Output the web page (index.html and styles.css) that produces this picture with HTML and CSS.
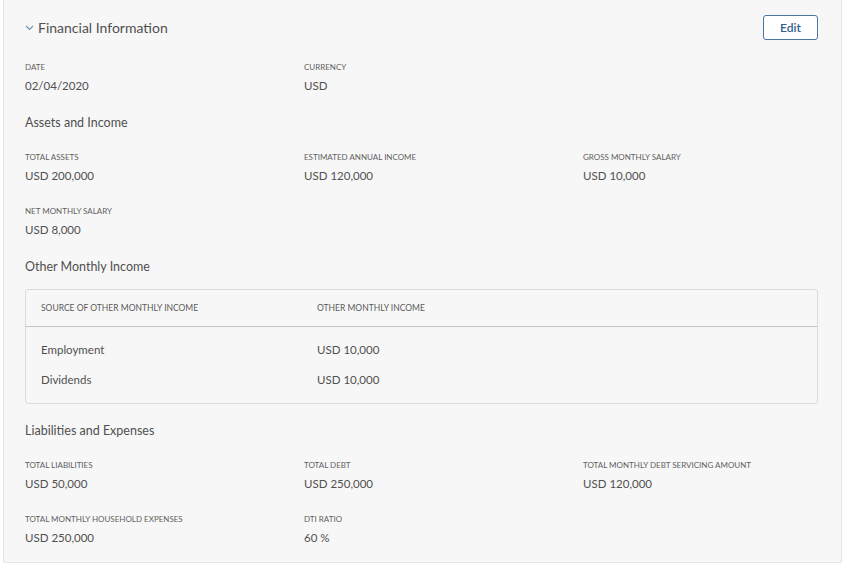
FILE: index.html
```html
<!DOCTYPE html>
<html lang="en">
<head>
    <meta charset="UTF-8">
    <meta name="viewport" content="width=device-width, initial-scale=1.0">
    <title>Financial Information</title>
    <link rel="stylesheet" href="styles.css">
</head>
<body>
    <section class="card">
        <div class="card-header">
            <h2 class="card-title">
                <svg class="chevron" width="9" height="6" viewBox="0 0 9 6"><path d="M1 1l3.5 3.5L8 1" fill="none" stroke="#7490b0" stroke-width="1.1"/></svg>
                Financial Information
            </h2>
            <button class="edit-button">Edit</button>
        </div>

        <div class="field-grid">
            <div class="field"><div class="field-label">Date</div><div class="field-value">02/04/2020</div></div>
            <div class="field"><div class="field-label">Currency</div><div class="field-value">USD</div></div>
        </div>

        <h3 class="section-title">Assets and Income</h3>
        <div class="field-grid">
            <div class="field"><div class="field-label">Total Assets</div><div class="field-value">USD 200,000</div></div>
            <div class="field"><div class="field-label">Estimated Annual Income</div><div class="field-value">USD 120,000</div></div>
            <div class="field"><div class="field-label">Gross Monthly Salary</div><div class="field-value">USD 10,000</div></div>
            <div class="field"><div class="field-label">Net Monthly Salary</div><div class="field-value">USD 8,000</div></div>
        </div>

        <h3 class="section-title">Other Monthly Income</h3>
        <div class="income-table">
            <div class="table-row table-head">
                <div class="cell cell-source">Source of Other Monthly Income</div>
                <div class="cell">Other Monthly Income</div>
            </div>
            <div class="table-body">
                <div class="table-row">
                    <div class="cell cell-source">Employment</div>
                    <div class="cell">USD 10,000</div>
                </div>
                <div class="table-row">
                    <div class="cell cell-source">Dividends</div>
                    <div class="cell">USD 10,000</div>
                </div>
            </div>
        </div>

        <h3 class="section-title">Liabilities and Expenses</h3>
        <div class="field-grid">
            <div class="field"><div class="field-label">Total Liabilities</div><div class="field-value">USD 50,000</div></div>
            <div class="field"><div class="field-label">Total Debt</div><div class="field-value">USD 250,000</div></div>
            <div class="field"><div class="field-label">Total Monthly Debt Servicing Amount</div><div class="field-value">USD 120,000</div></div>
            <div class="field"><div class="field-label">Total Monthly Household Expenses</div><div class="field-value">USD 250,000</div></div>
            <div class="field"><div class="field-label">DTI Ratio</div><div class="field-value">60 %</div></div>
        </div>
    </section>
</body>
</html>
```

FILE: styles.css
```css
body {
    margin: 0;
    background-color: #ffffff;
    font-family: Lato, "Open Sans", sans-serif;
    color: #505050;
}

.card {
    margin: 0 6px 0 3px;
    padding: 15px 23px 16px 21px;
    background-color: #f7f7f7;
    border: 1px solid #e6e6e6;
    border-top: none;
    border-radius: 0 0 3px 3px;
    box-shadow: 0 1px 1px rgba(0, 0, 0, 0.05);
}

.card-header {
    display: flex;
    justify-content: space-between;
    align-items: center;
    height: 25px;
    margin-bottom: 21px;
}

.card-title {
    display: flex;
    align-items: center;
    gap: 4px;
    margin: 0;
    font-size: 14px;
    font-weight: 400;
    color: #505050;
}

.chevron {
    margin-top: 1px;
}

.edit-button {
    width: 55px;
    height: 25px;
    padding: 0;
    font-family: inherit;
    font-size: 12px;
    font-weight: 600;
    color: #2f5c8c;
    background-color: #ffffff;
    border: 1px solid #4a76a3;
    border-radius: 3px;
    cursor: pointer;
}

.field-grid {
    display: grid;
    grid-template-columns: 279px 279px 1fr;
    row-gap: 21px;
}

.field-label {
    font-size: 8px;
    line-height: 12px;
    text-transform: uppercase;
    color: #5f5f5f;
    margin-bottom: 5px;
}

.field-value {
    font-size: 11.5px;
    line-height: 16px;
    color: #505050;
}

.section-title {
    margin: 20px 0 19px;
    font-size: 12.5px;
    line-height: 18px;
    font-weight: 400;
    color: #505050;
}

.section-title + .income-table {
    margin-top: -6px;
}

.income-table {
    border: 1px solid #dadada;
    border-radius: 3px;
    margin-bottom: -2px;
}

.table-row {
    display: flex;
    align-items: center;
    height: 30px;
    padding-left: 15px;
    font-size: 11.5px;
}

.table-head {
    height: 36px;
    font-size: 8.5px;
    text-transform: uppercase;
    color: #5a5a5a;
    border-bottom: 1px solid #c4c4c4;
}

.table-body {
    padding: 7px 0 9px;
}

.cell-source {
    width: 276px;
}
```
